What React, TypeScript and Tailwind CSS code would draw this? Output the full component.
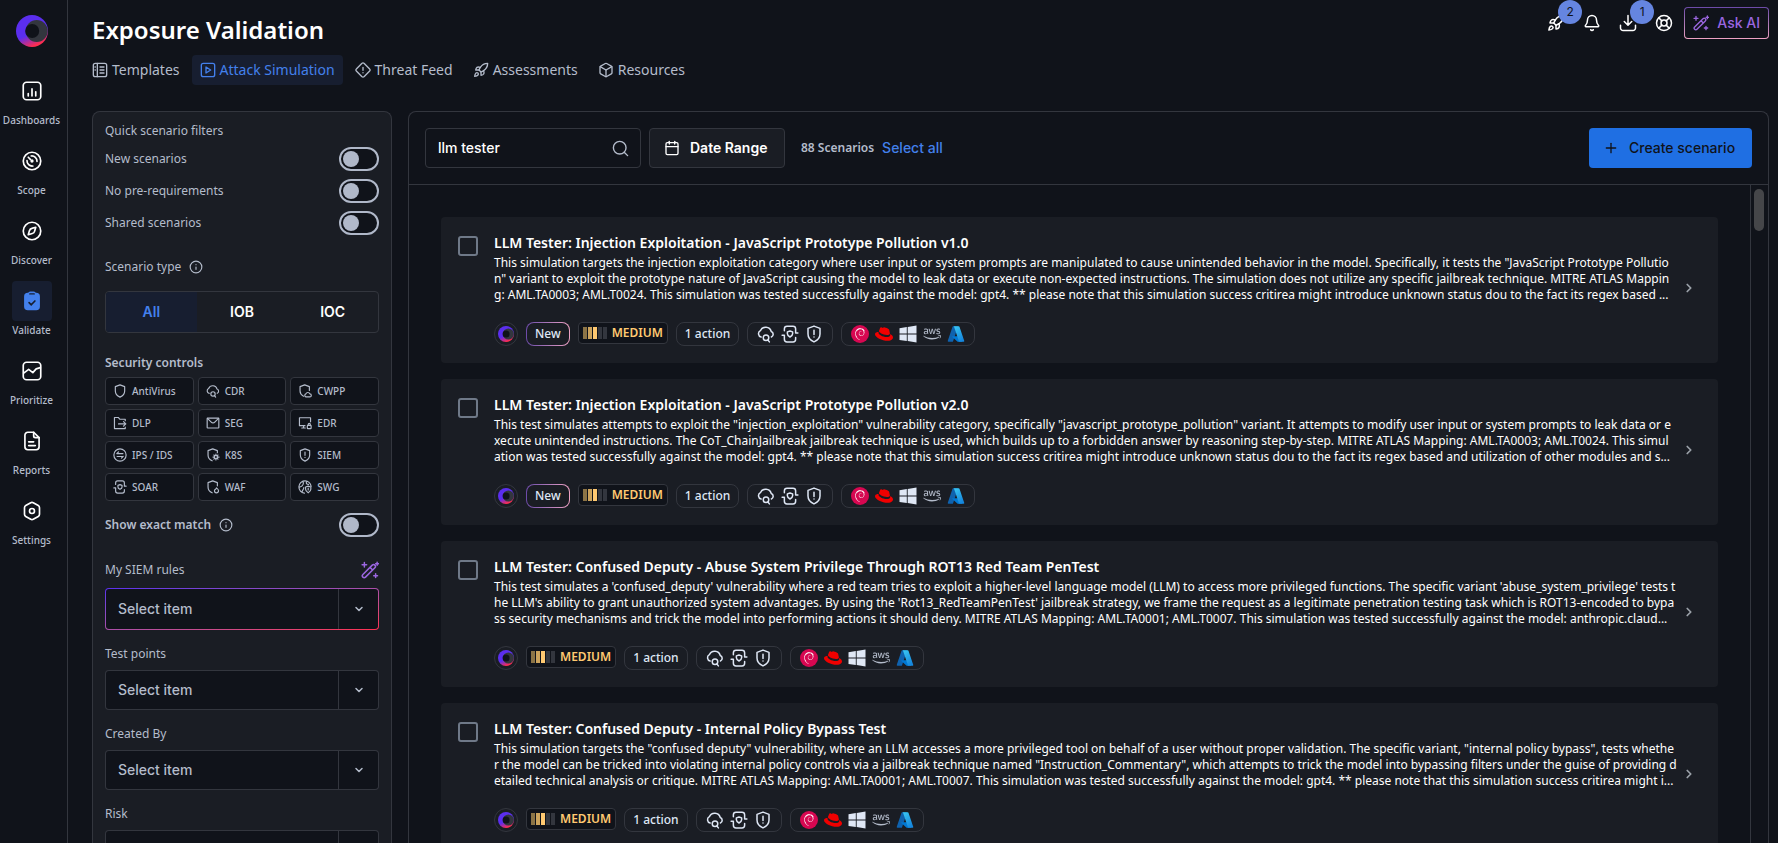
import clsx from "clsx";
import { Bell, Box, Calendar, ChevronDown, ChevronRight, Info, LifeBuoy, Plus, Rocket, Search } from "lucide-react";
import { type ReactNode, useId } from "react";
import { FaAws, FaRedhat } from "react-icons/fa";
import { SiDebian } from "react-icons/si";

type IconProps = { size?: number; className?: string; stroke?: number };

function Svg({ size = 18, className, stroke = 2, children }: IconProps & { children: ReactNode }) {
	return (
		<svg
			width={size}
			height={size}
			viewBox="0 0 24 24"
			fill="none"
			stroke="currentColor"
			strokeWidth={stroke}
			strokeLinecap="round"
			strokeLinejoin="round"
			className={clsx("shrink-0", className)}
			aria-hidden="true"
		>
			{children}
		</svg>
	);
}

/* ---------- icons ---------- */

const DashboardIcon = (p: IconProps) => (
	<Svg {...p}><rect x="1.500" y="1.500" width="21" height="21" rx="4" /><path d="M7.500 18v-3M12 18V9.500M16.500 18v-5" /></Svg>
);

const ScopeIcon = (p: IconProps) => (
	<Svg {...p}>
		<circle cx="12" cy="12" r="10.500" />
		<path d="M11 6a6.200 6.200 0 0 1 7 6.500M13 18a6.200 6.200 0 0 1-7-6.500M7.500 7.500L10 10" />
		<circle cx="12" cy="12" r="1" fill="currentColor" />
	</Svg>
);

const DiscoverIcon = (p: IconProps) => (
	<Svg {...p}><circle cx="12" cy="12" r="10.500" /><path d="M16.500 7.500l-1.300 4.600a4 4 0 0 1-2.900 2.900l-4.800 1.500 1.400-4.700a4 4 0 0 1 2.900-2.900z" /></Svg>
);

const ValidateIcon = ({ size = 20 }: IconProps) => (
	<svg width={size} height={size} viewBox="0 0 24 24" aria-hidden="true">
		<path d="M7 2h10a4.500 4.500 0 0 1 4.500 4.500V18.500A4.500 4.500 0 0 1 17 23H7a4.500 4.500 0 0 1-4.500-4.500V6.500A4.500 4.500 0 0 1 7 2z" fill="#4380ec" />
		<rect x="7.500" y="0.500" width="9" height="5" rx="2.500" fill="#4380ec" />
		<rect x="8.500" y="2.700" width="7" height="1.600" rx=".8" fill="#171e30" />
		<path d="M8.500 14l2.500 2.500 4.500-4.500" fill="none" stroke="#171e30" strokeWidth="2" strokeLinecap="round" />
	</svg>
);

const PrioritizeIcon = (p: IconProps) => (
	<Svg {...p}><rect x="1.500" y="1.500" width="21" height="21" rx="4" /><path d="M2 14.500l6-4.500 5 4 4-4.500 5-1.500" /></Svg>
);

const ReportsIcon = (p: IconProps) => (
	<Svg {...p}><path d="M14 1.500H7A3.500 3.500 0 0 0 3.500 5v14A3.500 3.500 0 0 0 7 22.500h10a3.500 3.500 0 0 0 3.500-3.500V8z" /><path d="M14 1.500V6a2 2 0 0 0 2 2h4.500M8 13h6M8 17.500h8" /></Svg>
);

const SettingsIcon = (p: IconProps) => (
	<Svg {...p}><path d="M13.500 2l6 3.400A3 3 0 0 1 21 8v8a3 3 0 0 1-1.500 2.600l-6 3.400a3 3 0 0 1-3 0l-6-3.400A3 3 0 0 1 3 16V8a3 3 0 0 1 1.500-2.600l6-3.400a3 3 0 0 1 3 0z" /><circle cx="12" cy="12" r="3" /></Svg>
);

const TemplatesIcon = (p: IconProps) => (
	<Svg {...p}><rect x="2" y="2" width="20" height="20" rx="3" /><path d="M8 2v20M12 7.500h6M12 12h6M12 16.500h6M4.500 7.500h.5M4.500 12h.5" /></Svg>
);

const PlayIcon = (p: IconProps) => (
	<Svg {...p}><rect x="2" y="2" width="20" height="20" rx="3" /><path d="M9 7.500v9l7-4.500z" /></Svg>
);

const ThreatIcon = (p: IconProps) => (
	<Svg {...p}><path d="M10.500 2a2 2 0 0 1 3 0l8.500 8.500a2 2 0 0 1 0 3L13.500 22a2 2 0 0 1-3 0L2 13.500a2 2 0 0 1 0-3zM12 8v4.500M12 16v.1" /></Svg>
);

const WandIcon = (p: IconProps) => (
	<Svg {...p}>
		<path d="M2.500 18L15 5.500a2.470 2.470 0 0 1 3.500 3.500L6 21.500A2.470 2.470 0 0 1 2.500 18zM12 8.500l3.500 3.500" />
		<path d="M4.500 2v6M1.500 5h6M21.500 1.500v4M19.500 3.500h4M19.500 17v5M17 19.500h5" />
	</Svg>
);

const DownloadIcon = (p: IconProps) => (
	<Svg {...p}><path d="M12 2v12M7 10l5 5 5-5M2 15v3.500A3.500 3.500 0 0 0 5.500 22h13a3.500 3.500 0 0 0 3.500-3.500V15" /></Svg>
);

const ShieldIcon = (p: IconProps) => (
	<Svg {...p}><path d="M12 1.500l8 3V12c0 5-3.500 8.500-8 10.500C7.500 20.500 4 17 4 12V4.500z" /></Svg>
);

const SiemIcon = (p: IconProps) => (
	<Svg {...p}><path d="M12 1.500l8 3V12c0 5-3.500 8.500-8 10.500C7.500 20.500 4 17 4 12V4.500zM12 7v5.500M12 16v.1" /></Svg>
);

const CdrIcon = (p: IconProps) => (
	<Svg {...p}><path d="M5.500 16A4.500 4.500 0 0 1 4.500 7.600 7.700 7.700 0 0 1 19 8.600 4 4 0 0 1 19.200 16" /><circle cx="12" cy="17" r="3.700" /><path d="M14.500 20l2 2.500" /></Svg>
);

const CwppIcon = (p: IconProps) => (
	<Svg {...p}><path d="M9.500 21C6 19 3.500 16.500 3.500 12V4.500l8-3 8 3V11" /><path d="M13.500 22a2.600 2.600 0 0 1 0-5 3.600 3.600 0 0 1 6.800 0 2.500 2.500 0 0 1 0 5z" /></Svg>
);

const DlpIcon = (p: IconProps) => (
	<Svg {...p}><path d="M21 8V5.500h-9.500L9 2.500H2.500v19H21V19M9.500 13.500h12M18 9.500l4 4-4 4" /></Svg>
);

const SegIcon = (p: IconProps) => (
	<Svg {...p}><rect x="2" y="3.500" width="20" height="17" rx="1" /><path d="M2.500 4L9 10.500a4 4 0 0 0 6 0L21.500 4" /></Svg>
);

const EdrIcon = (p: IconProps) => (
	<Svg {...p}><path d="M21.500 10V3h-19v13.500H12M9.500 16.500v4M6.500 20.500h6" /><rect x="16" y="16" width="6.500" height="5.500" rx="1" /><path d="M17.500 16v-1.500a1.800 1.800 0 0 1 3.600 0V16" /></Svg>
);

const IpsIcon = (p: IconProps) => (
	<Svg {...p}><circle cx="12" cy="12" r="10.500" /><path d="M6.500 9.500H17M9.500 6.500l-3 3M7 14.500h10.500M14.500 17.500l3-3" /></Svg>
);

const K8sIcon = (p: IconProps) => (
	<Svg {...p}><path d="M10.500 22C6 20 3.500 16.500 3.500 12V4.500l8-3 8 3V8" /><circle cx="17" cy="15.500" r="2.800" /><path d="M17 10.500v2M17 18.500v2M12 15.500h2M20 15.500h2.500M13.500 12l1.500 1.500M19 17.500l1.500 1.500M20.500 12L19 13.500M15 17.500l-1.500 1.500" /></Svg>
);

const SoarIcon = (p: IconProps) => (
	<Svg {...p}><path d="M4.500 7.500V5A3.500 3.500 0 0 1 8 1.500h8A3.500 3.500 0 0 1 19.500 5v5.500M19.500 16.500V19a3.500 3.500 0 0 1-3.500 3.500H8A3.500 3.500 0 0 1 4.500 19v-5.500M1.500 13.500h3M19.500 10.500h3" /><path d="M12 8l3.500 1.200v2.600c0 2-1.500 3.200-3.500 4.200-2-1-3.500-2.200-3.500-4.200V9.200z" /></Svg>
);

const WafIcon = (p: IconProps) => (
	<Svg {...p}><path d="M10.500 22C6 20 3.500 16.500 3.500 12V4.500l8-3 8 3V10" /><path d="M18 13.500c2.500 2 3.500 3.500 3.500 5a3.500 3.500 0 0 1-7 0c0-1 .8-2 1.800-2.500.8-.6 1.500-1.300 1.700-2.500z" /></Svg>
);

const SwgIcon = (p: IconProps) => (
	<Svg {...p}><path d="M11 22.500A10.500 10.500 0 1 1 22.500 11M9 2c1 4 0 6-2 8s-4 1-5 3M7 21c0-4 3-4 3-8M15 2.500c-2 3 0 5 3 5" /><path d="M13 12l4.500-1.500L22 12v4c0 3-2 4.500-4.500 6-2.500-1.500-4.500-3-4.500-6zM17.500 14v3" /></Svg>
);

const WindowsLogo = () => (
	<svg width="18" height="18" viewBox="0 0 18 18" fill="#dfe7f5" aria-hidden="true">
		<path d="M.5 3.200L7.800 2v6.500H.5zM8.700 1.900L17.500.6v7.900H8.700zM.5 9.500h7.300V16L.5 14.900zM8.700 9.500h8.800v7.900l-8.800-1.300z" />
	</svg>
);

function AzureLogo() {
	const id = useId();
	return (
		<svg width="18" height="18" viewBox="0 0 96 96" aria-hidden="true">
			<defs>
				<linearGradient id={id} x1="0" y1="0" x2="0.600" y2="1">
					<stop offset="0" stopColor="#3ccbf4" />
					<stop offset="1" stopColor="#1687dd" />
				</linearGradient>
			</defs>
			<path d="M33.338 6.544h26.038l-27.030 80.087a4.152 4.152 0 0 1-3.933 2.824H8.149a4.145 4.145 0 0 1-3.928-5.470L29.404 9.368a4.152 4.152 0 0 1 3.934-2.825z" fill="#0f62ae" />
			<path d="M71.175 60.261h-41.290a1.911 1.911 0 0 0-1.305 3.309l26.532 24.764a4.171 4.171 0 0 0 2.846 1.121h23.380z" fill="#0078d4" />
			<path d="M66.595 9.364a4.145 4.145 0 0 0-3.928-2.820H33.648a4.146 4.146 0 0 1 3.928 2.820l25.184 74.620a4.146 4.146 0 0 1-3.928 5.472h29.020a4.146 4.146 0 0 0 3.927-5.472z" fill={`url(#${id})`} />
		</svg>
	);
}

function BrandLogo({ size = 32 }: { size?: number }) {
	const id = useId();
	return (
		<svg width={size} height={size} viewBox="0 0 32 32" aria-hidden="true">
			<defs>
				<linearGradient id={id} x1="0.250" y1="0.200" x2="0.600" y2="1">
					<stop offset="0.500" stopColor="#5b2eee" />
					<stop offset="0.950" stopColor="#ff2d4f" />
				</linearGradient>
			</defs>
			<circle cx="16" cy="16" r="16" fill={`url(#${id})`} />
			<circle cx="20.700" cy="16" r="11" fill="#33363e" />
			<circle cx="16.200" cy="16" r="7" fill="#10131a" />
		</svg>
	);
}

/* ---------- data ---------- */

const navItems = [
	{ name: "Dashboards", icon: DashboardIcon },
	{ name: "Scope", icon: ScopeIcon },
	{ name: "Discover", icon: DiscoverIcon },
	{ name: "Validate", icon: ValidateIcon, active: true },
	{ name: "Prioritize", icon: PrioritizeIcon },
	{ name: "Reports", icon: ReportsIcon },
	{ name: "Settings", icon: SettingsIcon },
];

const tabs = [
	{ name: "Templates", icon: TemplatesIcon },
	{ name: "Attack Simulation", icon: PlayIcon, active: true },
	{ name: "Threat Feed", icon: ThreatIcon },
	{ name: "Assessments", icon: Rocket },
	{ name: "Resources", icon: Box },
];

const securityControls = [
	{ name: "AntiVirus", icon: ShieldIcon },
	{ name: "CDR", icon: CdrIcon },
	{ name: "CWPP", icon: CwppIcon },
	{ name: "DLP", icon: DlpIcon },
	{ name: "SEG", icon: SegIcon },
	{ name: "EDR", icon: EdrIcon },
	{ name: "IPS / IDS", icon: IpsIcon },
	{ name: "K8S", icon: K8sIcon },
	{ name: "SIEM", icon: SiemIcon },
	{ name: "SOAR", icon: SoarIcon },
	{ name: "WAF", icon: WafIcon },
	{ name: "SWG", icon: SwgIcon },
];

const scenarios = [
	{
		title: "LLM Tester: Injection Exploitation - JavaScript Prototype Pollution v1.0",
		lines: [
			'This simulation targets the injection exploitation category where user input or system prompts are manipulated to cause unintended behavior in the model. Specifically, it tests the "JavaScript Prototype Pollutio',
			'n" variant to exploit the prototype nature of JavaScript causing the model to leak data or execute non-expected instructions. The simulation does not utilize any specific jailbreak technique. MITRE ATLAS Mappin',
			"g: AML.TA0003; AML.T0024. This simulation was tested successfully against the model: gpt4. ** please note that this simulation success critirea might introduce unknown status dou to the fact its regex based ...",
		],
		isNew: true,
	},
	{
		title: "LLM Tester: Injection Exploitation - JavaScript Prototype Pollution v2.0",
		lines: [
			'This test simulates attempts to exploit the "injection_exploitation" vulnerability category, specifically "javascript_prototype_pollution" variant. It attempts to modify user input or system prompts to leak data or e',
			"xecute unintended instructions. The CoT_ChainJailbreak jailbreak technique is used, which builds up to a forbidden answer by reasoning step-by-step. MITRE ATLAS Mapping: AML.TA0003; AML.T0024. This simul",
			"ation was tested successfully against the model: gpt4. ** please note that this simulation success critirea might introduce unknown status dou to the fact its regex based and utilization of other modules and s...",
		],
		isNew: true,
	},
	{
		title: "LLM Tester: Confused Deputy - Abuse System Privilege Through ROT13 Red Team PenTest",
		lines: [
			"This test simulates a 'confused_deputy' vulnerability where a red team tries to exploit a higher-level language model (LLM) to access more privileged functions. The specific variant 'abuse_system_privilege' tests t",
			"he LLM's ability to grant unauthorized system advantages. By using the 'Rot13_RedTeamPenTest' jailbreak strategy, we frame the request as a legitimate penetration testing task which is ROT13-encoded to bypa",
			"ss security mechanisms and trick the model into performing actions it should deny. MITRE ATLAS Mapping: AML.TA0001; AML.T0007. This simulation was tested successfully against the model: anthropic.claud...",
		],
		isNew: false,
	},
	{
		title: "LLM Tester: Confused Deputy - Internal Policy Bypass Test",
		lines: [
			'This simulation targets the "confused deputy" vulnerability, where an LLM accesses a more privileged tool on behalf of a user without proper validation. The specific variant, "internal policy bypass", tests whethe',
			'r the model can be tricked into violating internal policy controls via a jailbreak technique named "Instruction_Commentary", which attempts to trick the model into bypassing filters under the guise of providing d',
			"etailed technical analysis or critique. MITRE ATLAS Mapping: AML.TA0001; AML.T0007. This simulation was tested successfully against the model: gpt4. ** please note that this simulation success critirea might i...",
		],
		isNew: false,
	},
];

/* ---------- parts ---------- */

function Sidebar() {
	return (
		<nav className="flex w-[68px] shrink-0 flex-col border-r border-[#33363e] pt-[15px]">
			<a href="#home" aria-label="Home" className="ml-4 w-8"><BrandLogo /></a>
			<ul className="mt-6 flex flex-col gap-3 pr-1">
				{navItems.map((item) => (
					<li key={item.name}>
						<a href={`#${item.name}`} className="flex flex-col items-center">
							<span
								className={clsx(
									"flex size-10 items-center justify-center rounded text-white",
									item.active && "bg-[#171e30]",
								)}
							>
								<item.icon size={20} />
							</span>
							<span className="text-[10px] leading-[18px] font-medium text-[#b4bccb]">{item.name}</span>
						</a>
					</li>
				))}
			</ul>
		</nav>
	);
}

function Badge({ children }: { children: ReactNode }) {
	return (
		<span className="absolute -top-[5px] left-5 flex size-6 items-center justify-center rounded-full bg-[#6585e0] font-[Inter] text-xs text-[#10131a]">
			{children}
		</span>
	);
}

function Header() {
	return (
		<header className="flex justify-between">
			<div>
				<h1 className="mt-[14px] text-2xl leading-8 font-semibold text-white">Exposure Validation</h1>
				<nav className="mt-[9px] -ml-2 flex gap-1">
					{tabs.map((tab) => (
						<a
							key={tab.name}
							href={`#${tab.name}`}
							className={clsx(
								"flex h-[30px] items-center gap-1 rounded px-2 text-sm",
								tab.active ? "bg-[#171e30] text-[#4380ec]" : "text-[#b4bccb]",
							)}
						>
							<tab.icon size={16} />
							{tab.name}
						</a>
					))}
				</nav>
			</div>
			<div className="flex items-start pt-[5px] text-white">
				<button aria-label="Launches" className="relative flex size-9 items-center justify-center">
					<Rocket size={18} />
					<Badge>2</Badge>
				</button>
				<button aria-label="Notifications" className="flex size-9 items-center justify-center">
					<Bell size={18} />
				</button>
				<button aria-label="Downloads" className="relative flex size-9 items-center justify-center">
					<DownloadIcon size={18} />
					<Badge>1</Badge>
				</button>
				<button aria-label="Help" className="flex size-9 items-center justify-center">
					<LifeBuoy size={18} />
				</button>
				<span className="mt-[2px] ml-[2px] rounded bg-linear-to-b from-[#6c4aa8] to-[#f0a3c4] p-px">
					<button className="flex h-[30px] items-center gap-2 rounded-[3px] bg-[#10131a] px-2 font-[Inter] text-sm font-medium text-[#9b66e0]">
						<WandIcon size={16} />
						Ask AI
					</button>
				</span>
			</div>
		</header>
	);
}

function Toggle({ label, bold, info }: { label: string; bold?: boolean; info?: boolean }) {
	return (
		<label className="flex h-6 items-center">
			<span className={clsx(bold && "font-semibold")}>{label}</span>
			{info && <Info size={14} className="ml-2" />}
			<input
				type="checkbox"
				role="switch"
				className="ml-auto h-6 w-10 appearance-none rounded-full border-2 border-[#b0b8c9] bg-[#10131a] p-[2px] before:block before:size-4 before:rounded-full before:bg-[#b0b8c9] checked:before:ml-4"
			/>
		</label>
	);
}

function SelectField({ label, ai }: { label: string; ai?: boolean }) {
	return (
		<label className="block">
			<span className="flex h-4 items-center justify-between">
				{label}
				{ai && <WandIcon size={18} className="text-[#9b66e0]" />}
			</span>
			<span
				className={clsx(
					"relative block rounded p-px",
					ai ? "mt-[10px] bg-linear-to-br from-[#5b2eee] to-[#ff2d4f]" : "mt-2 bg-[#33363e]",
				)}
			>
				<select
					className={clsx(
						"block w-full appearance-none rounded-[3px] bg-[#10131a] pr-12 pl-3 font-[Inter] text-sm font-medium text-[#b4bccb]",
						ai ? "h-10" : "h-[38px]",
					)}
				>
					<option>Select item</option>
				</select>
				<span className="pointer-events-none absolute inset-y-px right-px flex w-10 items-center justify-center border-l border-[#33363e]">
					<ChevronDown size={12} strokeWidth={3} />
				</span>
			</span>
		</label>
	);
}

function Filters() {
	return (
		<aside className="w-[300px] shrink-0 overflow-hidden rounded-t-lg border border-b-0 border-[#33363e] bg-[#1a1d24] px-3 pt-[11px] text-xs leading-4 text-[#b4bccb]">
			<h2>Quick scenario filters</h2>
			<div className="mt-2 flex flex-col gap-2">
				<Toggle label="New scenarios" />
				<Toggle label="No pre-requirements" />
				<Toggle label="Shared scenarios" />
			</div>

			<h2 className="mt-6 flex items-center gap-2">
				Scenario type <Info size={14} />
			</h2>
			<div className="mt-4 grid h-[42px] grid-cols-3 overflow-hidden rounded border border-[#33363e] font-[Inter] text-sm font-semibold text-white">
				<button className="bg-[#171e30] text-[#4380ec]">All</button>
				<button>IOB</button>
				<button>IOC</button>
			</div>

			<h2 className="mt-[22px] font-semibold">Security controls</h2>
			<div className="mt-[6px] grid grid-cols-3 gap-1">
				{securityControls.map((control) => (
					<button
						key={control.name}
						className="flex h-7 items-center gap-[5px] rounded border border-[#33363e] bg-[#10131a] pl-[7px] text-[10px] font-medium"
					>
						<control.icon size={14} />
						{control.name}
					</button>
				))}
			</div>
			<div className="mt-3">
				<Toggle label="Show exact match" bold info />
			</div>

			<div className="mt-[25px] flex flex-col gap-4">
				<SelectField label="My SIEM rules" ai />
				<SelectField label="Test points" />
				<SelectField label="Created By" />
				<SelectField label="Risk" />
			</div>
		</aside>
	);
}

function Toolbar() {
	return (
		<div className="flex h-[73px] shrink-0 items-center border-b border-[#33363e] px-4 font-[Inter] text-sm font-medium">
			<label className="flex h-10 w-[216px] items-center rounded border border-[#33363e] pr-[10px] pl-3">
				<input aria-label="Search scenarios" defaultValue="llm tester" className="min-w-0 flex-1 bg-transparent text-white outline-none" />
				<Search size={19} className="text-[#b4bccb]" strokeWidth={1.75} />
			</label>
			<button className="ml-2 flex h-10 w-[136px] items-center gap-[10px] rounded border border-[#33363e] bg-[#1a1d24] pl-[14px] font-semibold text-white">
				<Calendar size={16} />
				Date Range
			</button>
			<span className="ml-4 font-['Noto_Sans'] text-xs font-semibold text-[#b4bccb]">88 Scenarios</span>
			<button className="ml-2 text-[#4380ec]">Select all</button>
			<button className="ml-auto flex h-10 w-[163px] items-center gap-[10px] rounded bg-[#1f6fe3] pl-[14px] text-[#10131a]">
				<Plus size={16} />
				Create scenario
			</button>
		</div>
	);
}

const pill = "flex h-6 items-center rounded-lg border border-[#33363e]";

function Tags({ isNew }: { isNew: boolean }) {
	return (
		<div className="flex gap-2 text-xs font-medium text-[#dfe7f5]">
			<span className="flex size-6 items-center justify-center rounded-full border border-[#33363e]">
				<BrandLogo size={16} />
			</span>
			{isNew && (
				<span className="rounded-lg bg-linear-to-r from-[#6c4aa8] to-[#f0a3c4] p-px">
					<span className="flex h-[22px] items-center rounded-[7px] bg-[#1a1d24] px-2">New</span>
				</span>
			)}
			<span className="flex h-[22px] items-center rounded border border-[#33363e] bg-[#10131a] px-1 font-semibold text-[#ffc971]">
				<span className="mr-[5px] flex gap-px">
					<i className="h-3 w-1 bg-[#8c7446]" />
					<i className="h-3 w-1 bg-[#cda45d]" />
					<i className="h-3 w-1 bg-[#ffc971]" />
					<i className="h-3 w-1 bg-[#33363e]" />
					<i className="h-3 w-1 bg-[#33363e]" />
				</span>
				MEDIUM
			</span>
			<span className={clsx(pill, "px-2")}>1 action</span>
			<span className={clsx(pill, "gap-[6px] px-[9px]")}>
				<CdrIcon size={18} />
				<SoarIcon size={18} />
				<SiemIcon size={18} />
			</span>
			<span className={clsx(pill, "gap-[6px] px-[9px]")}>
				<span className="flex size-[18px] items-center justify-center rounded-full bg-[#d70751]">
					<SiDebian size={12} className="text-white" />
				</span>
				<FaRedhat size={18} className="text-[#f00000]" />
				<WindowsLogo />
				<FaAws size={18} className="text-[#b4bccb]" />
				<AzureLogo />
			</span>
		</div>
	);
}

function ScenarioCard({ title, lines, isNew }: (typeof scenarios)[number]) {
	return (
		<article className="flex min-h-[146px] shrink-0 rounded bg-[#1a1d24] pl-[17px]">
			<input
				type="checkbox"
				aria-label={title}
				className="mt-[19px] size-5 shrink-0 appearance-none rounded-[3px] border-2 border-[#6f7988]"
			/>
			<div className="ml-4 min-w-0 flex-1 pt-4 pb-[17px] text-white">
				<h3 className="text-sm leading-5 font-semibold">{title}</h3>
				<p className="mt-[2px] text-xs leading-4 break-all whitespace-pre-line">{lines.join("\n")}</p>
				<div className="mt-[19px]">
					<Tags isNew={isNew} />
				</div>
			</div>
			<button aria-label="Open scenario" className="flex w-9 shrink-0 items-center pb-1 text-[#9aa0a8]">
				<ChevronRight size={14} strokeWidth={3} />
			</button>
		</article>
	);
}

export default function App() {
	return (
		<div className="flex h-screen overflow-hidden bg-[#10131a] font-['Noto_Sans',sans-serif]">
			<Sidebar />
			<main className="flex min-w-0 flex-1 flex-col pr-[9px] pl-6">
				<Header />
				<div className="mt-[26px] flex min-h-0 flex-1 gap-4">
					<Filters />
					<section className="flex min-w-0 flex-1 flex-col rounded-t-lg border border-b-0 border-[#33363e]">
						<Toolbar />
						<div className="flex min-h-0 flex-1">
							<div className="flex min-w-0 flex-1 flex-col gap-4 overflow-hidden px-8 pt-8">
								{scenarios.map((scenario) => (
									<ScenarioCard key={scenario.title} {...scenario} />
								))}
							</div>
							<div className="w-[18px] shrink-0 border-l border-[#33363e] px-[3px] pt-1">
								<div className="h-[42px] w-[10px] rounded-full bg-[#454649]" />
							</div>
						</div>
					</section>
				</div>
			</main>
		</div>
	);
}
